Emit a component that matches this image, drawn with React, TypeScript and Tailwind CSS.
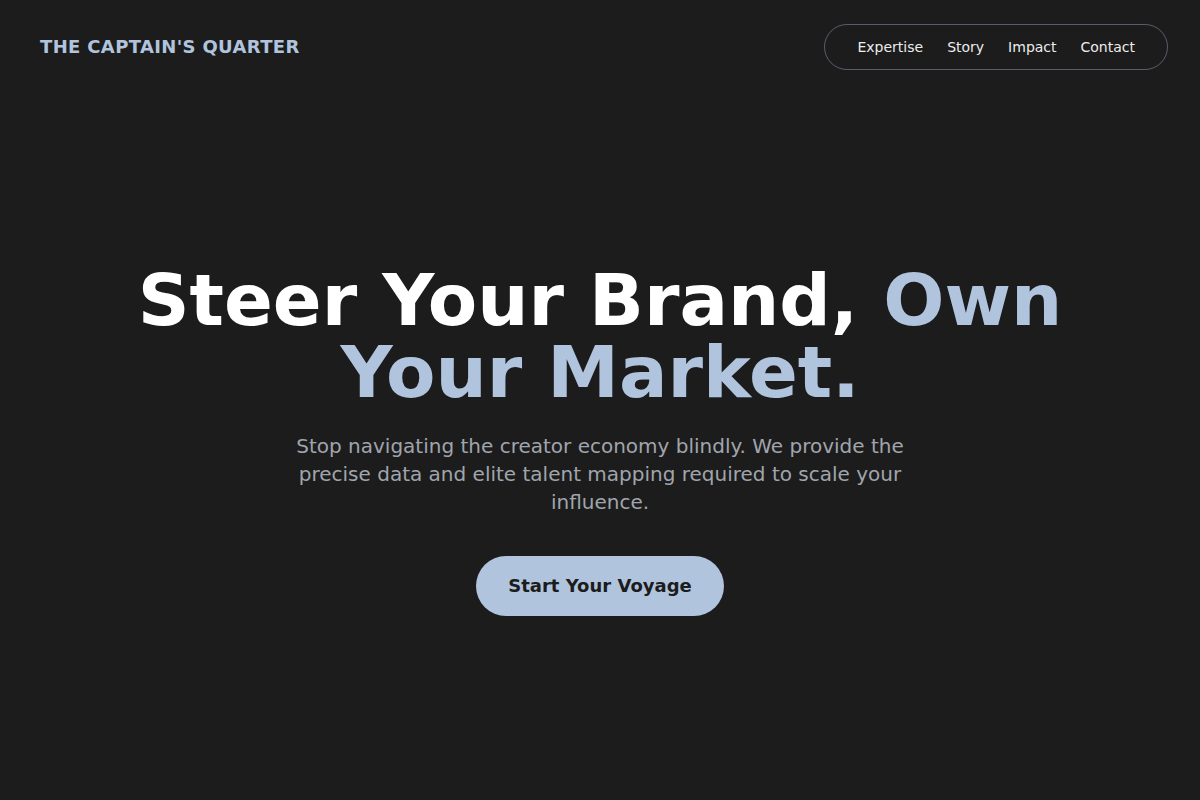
import React from "react";

const links = ["Expertise", "Story", "Impact", "Contact"];

export default function App() {
	return (
		<div
			className="min-h-screen flex flex-col bg-[#1c1c1c] text-white"
			style={{ fontFamily: '"DejaVu Sans", sans-serif' }}
		>
			<header className="flex items-center justify-between pl-10 pr-8 py-6">
				<div className="text-lg font-bold tracking-[0.35px] text-[#b0c4de]">THE CAPTAIN'S QUARTER</div>
				<nav className="flex items-center gap-6 rounded-full border border-[#b0c4de]/40 px-8 py-3">
					{links.map((l) => (
						<a key={l} href="#" className="text-sm text-[#ececec]">
							{l}
						</a>
					))}
				</nav>
			</header>

			<main className="flex-1 flex flex-col items-center justify-center text-center px-6 pb-3.5">
				<h1 className="max-w-5xl text-7xl leading-none font-bold mb-6">
					Steer Your Brand, <span className="text-[#b0c4de]">Own Your Market.</span>
				</h1>
				<p className="max-w-2xl text-xl text-[#a0a5ad]">
					Stop navigating the creator economy blindly. We provide the precise data and elite
					talent mapping required to scale your influence.
				</p>
				<button className="mt-10 rounded-full bg-[#b0c4de] px-8 py-4 text-lg font-bold text-[#1c1c1c]">
					Start Your Voyage
				</button>
			</main>
		</div>
	);
}
